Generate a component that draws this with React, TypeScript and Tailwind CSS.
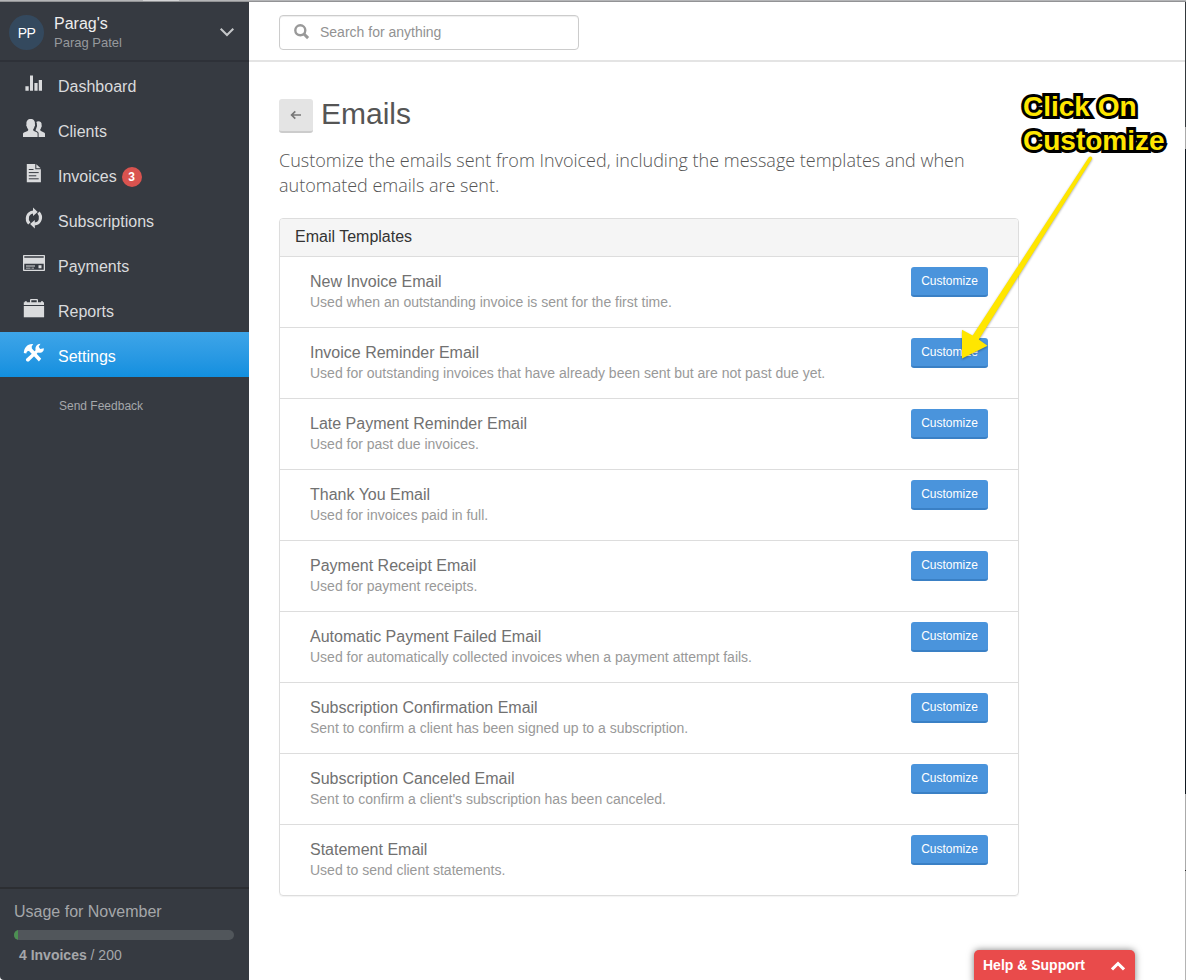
import type { ReactNode } from "react";

const rows = [
  ["New Invoice Email", "Used when an outstanding invoice is sent for the first time."],
  ["Invoice Reminder Email", "Used for outstanding invoices that have already been sent but are not past due yet."],
  ["Late Payment Reminder Email", "Used for past due invoices."],
  ["Thank You Email", "Used for invoices paid in full."],
  ["Payment Receipt Email", "Used for payment receipts."],
  ["Automatic Payment Failed Email", "Used for automatically collected invoices when a payment attempt fails."],
  ["Subscription Confirmation Email", "Sent to confirm a client has been signed up to a subscription."],
  ["Subscription Canceled Email", "Sent to confirm a client's subscription has been canceled."],
  ["Statement Email", "Used to send client statements."],
];

type Item = { label: string; icon: ReactNode; badge?: number; active?: boolean };

const items: Item[] = [
  {
    label: "Dashboard",
    icon: <path d="M3.400 15.300h3.300v4.400H3.400zM8 4.400h3v15.300H8zM12.400 12h3.200v7.700h-3.200zM16.800 9h3.200v10.700h-3.200z" />,
  },
  {
    label: "Clients",
    icon: (
      <>
        <path d="M1 21v-3.300c0-.6.4-1 1-1.200l3.600-1.600c.5-.3.7-.8.7-1.400-.9-1-1.300-2-1.500-3-.6-.6-.7-1.700-.3-2.300C4 5 5.800 3 8.700 3s4.700 2 4.200 5.200c.4.600.2 1.700-.4 2.300-.2 1-.6 2-1.400 3 0 .7.300 1.200.8 1.400l2.800 1.400c.6.300.9.700.9 1.300V21z" />
        <path d="M14.300 6c.5-.5 1.200-.8 2-.8 2.200 0 3.700 1.500 3.300 4.100.4.500.2 1.400-.3 1.900-.2.900-.5 1.600-1.100 2.300 0 .8.200 1.300.8 1.600l3 1.500c.7.300 1 .8 1 1.500V21h-6.400v-3.500c0-1-.5-1.700-1.400-2.100l-1.500-.8c-.2-.2-.2-.5-.1-.7.500-.8.700-1.500.8-2.200.6-.8.800-2 .500-2.900.1-1-.1-2-.6-2.800z" />
      </>
    ),
  },
  {
    label: "Invoices",
    badge: 3,
    icon: (
      <>
        <path d="M4.800 3h8.500v5.300h5.600v13H4.800z" />
        <path d="M14.300 3.200l4.400 4h-4.400z" />
        <path d="M6.800 8.500h4.700M6.800 11.600h9.900M6.800 14.800h7.500M6.800 17.800h9.900" stroke="#363a41" strokeWidth="1" />
      </>
    ),
  },
  {
    label: "Subscriptions",
    icon: (
      <>
        <path d="M7.300 17.600C3.600 13.500 5 6.500 11.600 5.900" fill="none" stroke="currentColor" strokeWidth="3" />
        <path d="M11 1.600l4.700 4.500-4.700 4z" />
        <path d="M16.500 6.500c3.700 4.100 2.300 11-4.300 11.600" fill="none" stroke="currentColor" strokeWidth="3" />
        <path d="M12.800 22.400l-4.700-4.500 4.700-4z" />
      </>
    ),
  },
  {
    label: "Payments",
    icon: (
      <>
        <path fillRule="evenodd" d="M2 4h20c.6 0 1 .4 1 1v14c0 .6-.4 1-1 1H2c-.6 0-1-.4-1-1V5c0-.6.4-1 1-1zm.3 1.300v1.400h19.400V5.300zm0 7.400v6h19.400v-6z" />
        <path d="M4 14.600h9v1H4zM4 16.700h4.500v.9H4zM9.500 16.700H12v.9H9.500zM16.500 14.200h3v3h-3z" />
      </>
    ),
  },
  {
    label: "Reports",
    icon: (
      <>
        <path fillRule="evenodd" d="M1.800 6.200h1V5.300h2v.9H8V4.300C8 3.500 8.500 3 9.300 3h5.400c.8 0 1.300.5 1.300 1.300v1.900h3v-.9h2v.9h1V9H1.800zm7.500 0h5.400V4.300H9.300z" />
        <path d="M1.800 10h20.300v11.300H1.800z" />
      </>
    ),
  },
  {
    label: "Settings",
    active: true,
    icon: (
      <>
        <path d="M1.800 12C2 6.600 5.500 2.400 11.200 3L9.700 5.600l.2 1.900 9.300 10.300-2.300 2.700L7.300 10.200c-1.900-.6-2.700.6-3 2.400z" />
        <path d="M4 18l9.600-8.800c-.7-3.500 1.300-6.200 4.900-6.400l-1.800 3 1.500 2.200 3.600-.8c.3 3.300-2.400 5.400-5.900 4.400L6.800 20.500c-1.800.5-3.400-.9-2.800-2.500z" />
      </>
    ),
  },
];

function NavItem({ label, icon, badge, active }: Item) {
  return (
    <a
      className={
        active
          ? "flex h-[45px] items-start bg-linear-to-b from-[#3da5e8] to-[#118fdf] pl-[22px] text-white"
          : "flex h-[45px] items-start pl-[22px] text-[#dadbdd]"
      }
    >
      <svg className="mt-[9px] size-6 shrink-0" viewBox="0 0 24 24" fill="currentColor">
        {icon}
      </svg>
      <span className="ml-3 mt-[13px] text-[16px] leading-6">{label}</span>
      {badge && (
        <span className="ml-[5px] mt-[15px] flex size-5 items-center justify-center rounded-full bg-[#d9534f] text-[12px] font-bold text-white">
          {badge}
        </span>
      )}
    </a>
  );
}

export default function App() {
  return (
    <div className="relative flex h-[980px] w-[1186px] flex-col overflow-hidden bg-white font-['Liberation_Sans',Arial,sans-serif]">
      <div className="flex h-[2px] shrink-0 flex-col">
        <div className="flex h-px bg-[#b4b5b7]">
          <div className="ml-[143px] w-[36px] bg-[#d4d4d6]" />
        </div>
        <div className="h-px bg-[#929395]" />
      </div>
      <div className="flex min-h-0 flex-1">
        <aside className="flex w-[249px] shrink-0 flex-col rounded-bl-[4px] bg-[#363a41]">
          <div className="flex h-[60px] shrink-0 items-start border-b-2 border-[#2e3138] pl-[9px]">
            <div className="mt-[13px] flex size-[35px] items-center justify-center rounded-full bg-[#34495e] pt-[2px] text-[14px] tracking-[-0.5px] text-white">
              PP
            </div>
            <div className="ml-[10px] mt-[12px] flex-1">
              <div className="text-[16px] leading-[20px] text-[#eeeeee]">Parag's</div>
              <div className="text-[13px] leading-[18px] text-[#96999d]">Parag Patel</div>
            </div>
            <svg className="mr-[14px] mt-[25px] h-[10px] w-4" viewBox="0 0 16 10" fill="none" stroke="#c5c7c9" strokeWidth="2">
              <path d="M1.700 1.700L8 8l6.300-6.300" />
            </svg>
          </div>
          <nav className="flex flex-col">
            {items.map((item) => (
              <NavItem key={item.label} {...item} />
            ))}
          </nav>
          <a className="ml-[59px] mt-5 text-[12px] leading-[18px] text-[#a5a7aa]">Send Feedback</a>
          <div className="mt-auto h-[93px] border-t-2 border-[#2c2e32] px-[14px] pt-[11px] text-[#a5a7aa]">
            <div className="text-[16px] leading-6">Usage for November</div>
            <div className="mt-[6px] h-[10px] w-[220px] overflow-hidden rounded-full bg-[#51565b]">
              <div className="h-full w-1 bg-[#4c8f52]" />
            </div>
            <div className="ml-[5px] mt-[5px] text-[14px] leading-5">
              <b>4 Invoices</b> / 200
            </div>
          </div>
        </aside>
        <main className="flex flex-1 flex-col">
          <header className="h-[60px] shrink-0 border-b-2 border-[#e4e4e4] pl-[30px] pt-[13px]">
            <div className="flex h-[35px] w-[300px] items-center rounded-[4px] border border-[#cccccc] pl-[14px] shadow-[inset_0_1px_1px_rgba(0,0,0,0.07)]">
              <svg className="mb-[2px] size-4" viewBox="0 0 16 16" fill="none" stroke="#999" strokeWidth="2.400">
                <circle cx="6.300" cy="6.300" r="5" />
                <path d="M10 10l4.100 4.100" strokeWidth="3" />
              </svg>
              <span className="mb-[2px] ml-[10px] text-[14px] leading-5 text-[#929292]">Search for anything</span>
            </div>
          </header>
          <div className="pl-[30px] pt-[37px]">
            <div className="flex items-start">
              <button className="flex h-[34px] w-[34px] items-center justify-center rounded-[3px] border-b-2 border-[#cccccc] bg-[#e4e4e4]">
                <svg className="h-[10px] w-[12px]" viewBox="0 0 12 10" fill="none" stroke="#777" strokeWidth="1.700">
                  <path d="M11 5H2M5.300 1.300L1.600 5l3.700 3.700" />
                </svg>
              </button>
              <h1 className="ml-2 mt-[-3px] text-[30px] leading-[36px] text-[#555]">Emails</h1>
            </div>
            <p className="mt-[15px] font-['Open_Sans',sans-serif] text-[18px] font-light leading-[25px] text-[#555]">
              Customize the emails sent from Invoiced, including the message templates and when
              <br />
              automated emails are sent.
            </p>
            <section className="mt-[20px] w-[740px] rounded-[4px] border border-[#dddddd] shadow-[0_1px_1px_rgba(0,0,0,0.05)]">
              <h2 className="h-[37px] rounded-t-[3px] bg-[#f5f5f5] pl-[15px] pt-[6px] text-[16px] leading-6 text-[#333]">
                Email Templates
              </h2>
              {rows.map(([title, text]) => (
                <div key={title} className="flex h-[71px] items-start justify-between border-t border-[#dddddd] pl-[30px] pr-[30px]">
                  <div className="pt-[14px]">
                    <div className="text-[16px] leading-[22px] text-[#717171]">{title}</div>
                    <div className="mt-[-1px] text-[14px] leading-5 text-[#999]">{text}</div>
                  </div>
                  <button className="mt-[10px] h-[30px] w-[77px] rounded-[3px] border-b-2 border-[#3a80c5] bg-[#4a94dc] pb-px text-[12px] leading-[18px] text-white">
                    Customize
                  </button>
                </div>
              ))}
            </section>
          </div>
        </main>
        <div className="flex w-px shrink-0 flex-col">
          <div className="h-[125px] bg-[#34393d]" />
          <div className="h-[22px] bg-[#aaa]" />
          <div className="h-[645px] bg-[#111820]" />
          <div className="h-[76px] bg-[#aaa]" />
          <div className="h-px bg-[#222]" />
          <div className="flex-1 bg-[#b4b4b4]" />
        </div>
      </div>
      <div className="absolute left-[974px] top-[950px] flex h-[34px] w-[161px] items-start rounded-t-[5px] bg-[#e94b4b] pl-[9px] pt-[5px] text-[14px] font-bold leading-5 text-white shadow-[0_0_7px_rgba(0,0,0,0.5)]">
        Help &amp; Support
        <svg className="ml-auto mr-[10px] mt-[6px] h-[10px] w-[14px]" viewBox="0 0 14 10" fill="none" stroke="white" strokeWidth="3">
          <path d="M1 8.400L7 2.500l6 5.900" />
        </svg>
      </div>
      <div className="absolute left-[1023px] top-[90px] whitespace-nowrap text-[28px] font-bold leading-[34px] text-[#ffe600] [-webkit-text-stroke:6px_black] [paint-order:stroke_fill] [stroke-linejoin:round]">
        <div>Click On</div>
        <div>Customize</div>
      </div>
      <svg className="absolute left-[950px] top-[150px] h-[220px] w-[150px] drop-shadow-[0_1px_1px_rgba(0,0,0,0.35)]" viewBox="950 150 150 220" fill="#ffe600">
        <path d="M1088.800 157.300L972.700 335.500l-10.700-5.700v28.600l25.500-12.700-8.700-6.300L1092 159c1-2-2-3.400-3.200-1.700z" />
      </svg>
    </div>
  );
}
